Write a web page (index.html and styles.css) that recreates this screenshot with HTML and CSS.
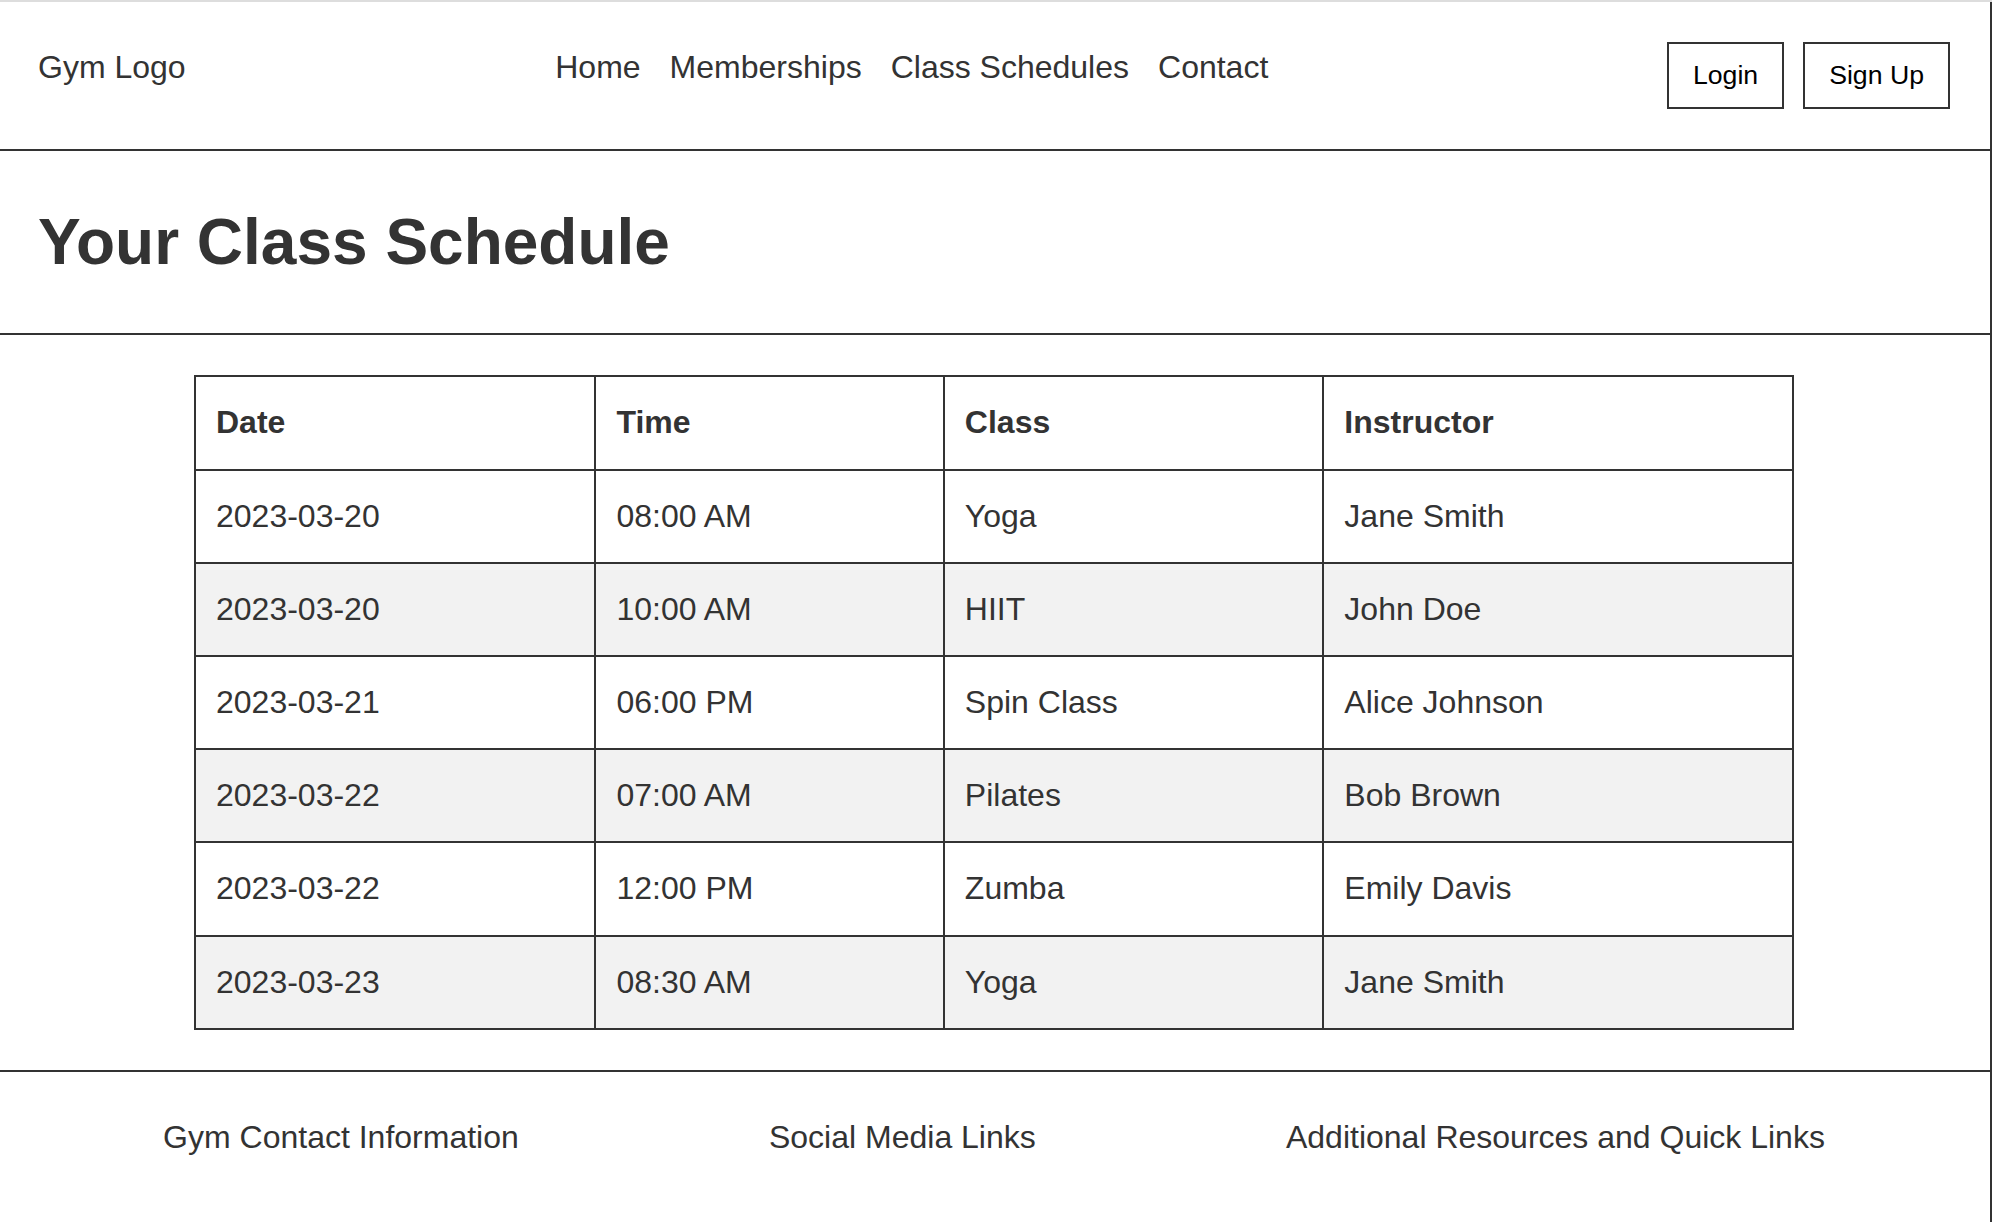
FILE: index.html
```html
<!DOCTYPE html>
<html lang="en">
<head>
<meta charset="utf-8">
<title>Your Class Schedule</title>
<link rel="stylesheet" href="styles.css">
</head>
<body>
<div class="page">
  <header class="site-header">
    <div class="logo">Gym Logo</div>
    <nav class="main-nav">
      <ul class="nav-list">
        <li class="nav-item">Home</li>
        <li class="nav-item">Memberships</li>
        <li class="nav-item">Class Schedules</li>
        <li class="nav-item">Contact</li>
      </ul>
    </nav>
    <div class="auth">
      <button class="auth-btn">Login</button>
      <button class="auth-btn">Sign Up</button>
    </div>
  </header>

  <section class="title-section">
    <h1 class="page-title">Your Class Schedule</h1>
  </section>

  <section class="schedule-section">
    <table class="schedule">
      <thead>
        <tr><th>Date</th><th>Time</th><th>Class</th><th>Instructor</th></tr>
      </thead>
      <tbody>
        <tr><td>2023-03-20</td><td>08:00 AM</td><td>Yoga</td><td>Jane Smith</td></tr>
        <tr><td>2023-03-20</td><td>10:00 AM</td><td>HIIT</td><td>John Doe</td></tr>
        <tr><td>2023-03-21</td><td>06:00 PM</td><td>Spin Class</td><td>Alice Johnson</td></tr>
        <tr><td>2023-03-22</td><td>07:00 AM</td><td>Pilates</td><td>Bob Brown</td></tr>
        <tr><td>2023-03-22</td><td>12:00 PM</td><td>Zumba</td><td>Emily Davis</td></tr>
        <tr><td>2023-03-23</td><td>08:30 AM</td><td>Yoga</td><td>Jane Smith</td></tr>
      </tbody>
    </table>
  </section>

  <footer class="site-footer">
    <div class="footer-item">Gym Contact Information</div>
    <div class="footer-item">Social Media Links</div>
    <div class="footer-item">Additional Resources and Quick Links</div>
  </footer>
</div>
</body>
</html>
```

FILE: styles.css
```css
* {
  box-sizing: border-box;
}

html, body {
  margin: 0;
  padding: 0;
}

body {
  border-top: 2px solid #dddddd;
  font-family: "Liberation Sans", Arial, Helvetica, sans-serif;
  font-size: 32px;
  line-height: 1.6;
  color: #333333;
  background: #ffffff;
}

.page {
  border-right: 2px solid #333333;
  min-height: calc(100vh - 2px);
}

/* Header */
.site-header {
  display: flex;
  justify-content: space-between;
  align-items: flex-start;
  padding: 40px 40px 40px 38px;
  border-bottom: 2px solid #333333;
}

.logo {
  white-space: nowrap;
}

.nav-list {
  display: flex;
  list-style: none;
  margin: 0;
  padding: 0;
}

.nav-item {
  margin-right: 29px;
  white-space: nowrap;
}

.auth {
  display: flex;
  gap: 19px;
}

.auth-btn {
  font-family: "Liberation Sans", Arial, Helvetica, sans-serif;
  font-size: 26.667px;
  line-height: normal;
  color: #000000;
  background: #ffffff;
  border: 2px solid #333333;
  padding: 16px 24px;
  margin: 0;
}

/* Title */
.title-section {
  padding: 40px 40px 40px 38px;
  border-bottom: 2px solid #333333;
}

.page-title {
  margin: 0;
  font-size: 64px;
  font-weight: bold;
  line-height: 1.6;
}

/* Table */
.schedule-section {
  padding: 40px 40px 40px 38px;
}

.schedule {
  width: 100%;
  max-width: 1600px;
  margin: 0 auto;
  border-collapse: collapse;
}

.schedule th,
.schedule td {
  border: 2px solid #333333;
  padding: 20px;
  text-align: left;
  white-space: nowrap;
}

.schedule th {
  font-weight: bold;
}

.schedule tbody tr:nth-child(even) {
  background: #f2f2f2;
}

/* Footer */
.site-footer {
  display: flex;
  justify-content: space-around;
  padding: 40px 40px 40px 38px;
  border-top: 2px solid #333333;
}

.footer-item {
  white-space: nowrap;
}
```
